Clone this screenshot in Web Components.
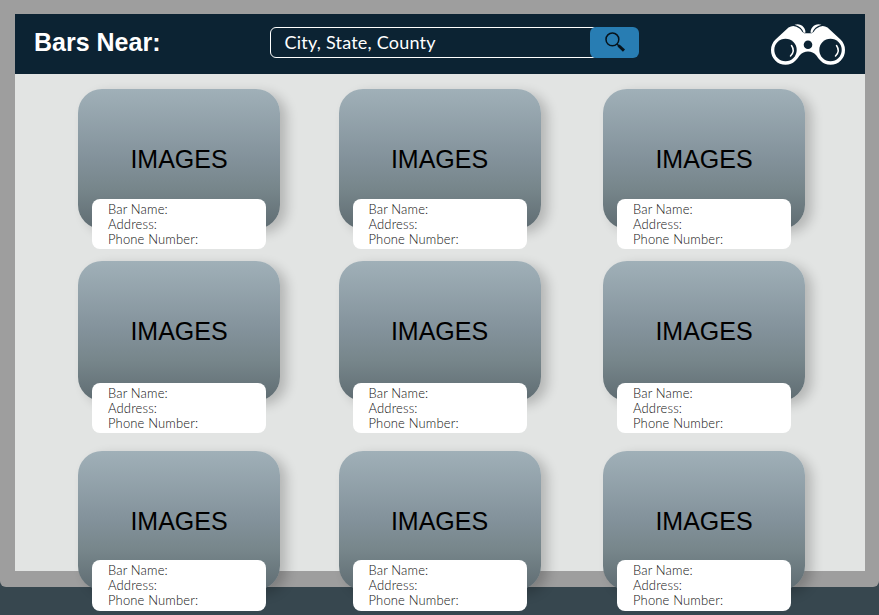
<!DOCTYPE html>
<html lang="en">
<head>
<meta charset="utf-8">
<title>Bars Near</title>
<style>
html,body{margin:0;height:615px;overflow:hidden;background:#37474f;font-family:"Liberation Sans",Arial,sans-serif}
</style>
</head>
<body>
<bar-finder></bar-finder>
<script>
const define = (name, html) => customElements.define(name, class extends HTMLElement {
  constructor() {
    super();
    const t = document.createElement('template');
    t.innerHTML = html;
    this.attachShadow({mode: 'open'}).append(t.content.cloneNode(true));
  }
});

define('binocular-icon', `
<style>:host{display:block;width:76px;height:42px}svg{display:block}</style>
<svg width="76" height="42" viewBox="0 0 76 42">
  <path fill="#fff" d="M18.500 4.500Q24 1 29.500 5.500C32 7.500 32.500 10.300 35 10.300H41C43.500 10.300 44 7.500 46.500 5.500Q52 1 57.500 4.500L70.500 16.500C73.500 19.500 75 23 75 27A14.500 14.500 0 0 1 60.500 41.700C52 41.700 49 36 46 32Q43 28.500 38 28.500T30 32C27 36 24 41.700 15.500 41.700A14.500 14.500 0 0 1 1 27C1 23 2.500 19.500 5.500 16.500Z"/>
  <path fill="#fff" d="M24.500 1.800Q29 .2 32.200 2.800T35.500 9.500L33.800 10Q32 3.800 24.500 1.800ZM51.500 1.800Q47 .2 43.800 2.800T40.500 9.500L42.200 10Q44 3.800 51.500 1.800Z"/>
  <g fill="#0c2333"><circle cx="15.500" cy="27" r="11.200"/><circle cx="60.500" cy="27" r="11.200"/><circle cx="38" cy="21.700" r="4.300"/></g>
  <path fill="none" stroke="#fff" stroke-width="1.500" stroke-linecap="round" d="M21.500 22.500Q25.500 28 20.500 33M66.500 22.500Q70.500 28 65.500 33"/>
</svg>`);

define('search-box', `
<style>
:host{display:flex;width:370px;height:31px;box-sizing:border-box}
.field{box-sizing:border-box;width:328px;margin-right:-8px;border:1.5px solid #fff;border-radius:6px;padding-left:14px;color:#fff;font:18px/29px Lato,sans-serif;letter-spacing:.22px;white-space:nowrap}
.go{width:49px;height:31px;border-radius:6px;background:#287db3;display:flex;justify-content:center;align-items:start;padding:3.5px 0 0 2px;box-sizing:border-box}
</style>
<div class="field"><slot></slot></div>
<div class="go"><svg width="22" height="22" viewBox="0 0 22 22" fill="none" stroke="#07131b"><circle cx="8.400" cy="8.400" r="6.400" stroke-width="1.500"/><path d="M13 13l2 2" stroke-width="1.600"/><path d="M14.500 14.500l5.500 5.200" stroke-width="3"/></svg></div>`);

define('top-bar', `
<style>
:host{display:flex;box-sizing:border-box;height:60px;background:#0c2333;padding-left:19px}
h1{margin:0;width:235.500px;color:#fff;font:bold 25px/56px "Liberation Sans",Arial,sans-serif}
search-box{margin-top:13px}
binocular-icon{margin:9px 0 0 130.500px}
</style>
<h1><slot></slot></h1><search-box>City, State, County</search-box><binocular-icon></binocular-icon>`);

define('bar-card', `
<style>
:host{display:block;width:202px;height:139.500px;position:relative}
.pic{height:139.500px;border-radius:24px;background:linear-gradient(#a0b0b8 0%,#83929b 49%,#77868b 71%,#5f6c72 100%);box-shadow:7px 4px 12px rgba(0,0,0,.2);text-align:center;font-size:25px;line-height:141px;color:#000}
.info{position:absolute;left:14px;top:var(--info-top,109.500px);box-sizing:border-box;width:174px;height:50.500px;border-radius:8px;background:#fff;padding:3px 0 0 16px;font:300 13px/15px Lato,sans-serif;letter-spacing:.15px;color:#111}
</style>
<div class="pic">IMAGES</div>
<div class="info"><div>Bar Name:</div><div>Address:</div><div>Phone Number:</div></div>`);

define('bar-grid', `
<style>
:host{display:grid;grid-template-columns:260.500px 264.500px 202px;grid-template-rows:172px 189.500px 140px;padding:15.400px 0 0 63px}
.mid{--info-top:121.500px}
</style>
<bar-card></bar-card><bar-card></bar-card><bar-card></bar-card>
<bar-card class="mid"></bar-card><bar-card class="mid"></bar-card><bar-card class="mid"></bar-card>
<bar-card></bar-card><bar-card></bar-card><bar-card></bar-card>`);

define('bar-finder', `
<style>
:host{display:block;box-sizing:border-box;width:879px;height:587px;padding:14px 14px 16px 15px;background:#9e9e9e;border-radius:0 0 6px 6px}
main{height:557px;background:#e2e4e3}
</style>
<main><top-bar>Bars Near:</top-bar><bar-grid></bar-grid></main>`);
</script>
</body>
</html>
